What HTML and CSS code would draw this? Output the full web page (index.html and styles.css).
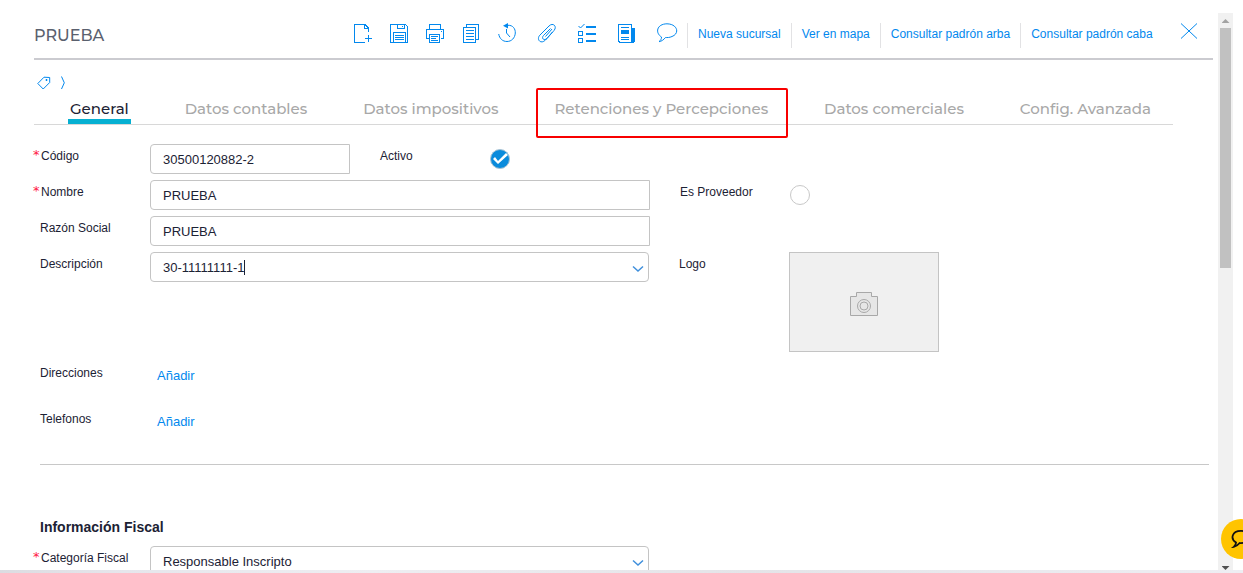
FILE: index.html
```html
<!DOCTYPE html>
<html lang="es">
<head>
<meta charset="utf-8">
<title>PRUEBA</title>
<link rel="stylesheet" href="styles.css">
</head>
<body>
<main class="dialog">
  <div class="content">
    <header class="header">
      <h1 class="title">PRUEBA</h1>
      <div class="toolbar">
        <div class="tools">
          <button class="tool" aria-label="Nuevo"><svg width="20" height="20" viewBox="0 0 20 20"><path d="M12 19.500H1.500V1.500H12L15.500 5V9M11.500 1.500V5.500H15.500M12.500 2.500L15 5M15.500 11.500V18.500M12 15.500H19"/></svg></button>
          <button class="tool" aria-label="Guardar"><svg width="20" height="20" viewBox="0 0 20 20"><path d="M1.500 1.500H16.500L18.500 3.500V19.500H1.500ZM8.500 1.500V5.500H15.500V1.500M13 3.500H14M4 19.500V9.500H16.500V19.500M5.500 12.500H14.500M5.500 14.500H14.500M5.500 16.500H14.500"/></svg></button>
          <button class="tool" aria-label="Imprimir"><svg width="20" height="20" viewBox="0 0 20 20"><path d="M4.500 6V1.500H15.500V6M4.500 15.500H1.500V6.500H18.500V15.500H15.500M4.500 11.500H14.500V19.500H4.500ZM6 13.500H13M6 15.500H11M6 17.500H13M16 8.500H17"/></svg></button>
          <button class="tool" aria-label="Copiar"><svg width="20" height="20" viewBox="0 0 20 20"><path d="M2.500 4.500H14.500V19.500H2.500ZM5.500 4V1.500H17.500V16.500H15M4.500 7.500H13M4.500 10.500H13M4.500 13.500H13M4.500 16.500H13"/></svg></button>
          <button class="tool" aria-label="Historial"><svg class="smooth" width="20" height="20" viewBox="0 0 20 20"><path d="M11 2.300C16 2 18.500 6 18.300 10C18 15 14.500 18.500 10 18.500C5.500 18.500 2.500 15.500 1.700 11M9.500 6V10L13 14"/><path class="solid" d="M6 2.800L11 0V5.500Z"/></svg></button>
        </div>
        <div class="tools wide">
          <button class="tool" aria-label="Adjuntar"><svg class="smooth" width="20" height="20" viewBox="0 0 20 20"><path d="M15.500 9L8.500 17C3.500 22 -1 16 3 12L12 3C16-1 20.500 3.500 17 7.500L10 15.500C7 18 4 15.500 6.500 12.500L13.500 5.500M15 6L8.500 13.500"/></svg></button>
          <button class="tool" aria-label="Tareas"><svg width="20" height="20" viewBox="0 0 20 20"><path class="smooth" d="M1.500 3L3.500 5L7.500 1"/><path d="M1.500 8.500H5.500V12.500H1.500ZM1.500 15.500H5.500V19.500H1.500Z"/><path class="solid" d="M9 3H19V5H9ZM9 10H19V12H9ZM9 17H19V19H9Z"/></svg></button>
          <button class="tool" aria-label="Novedades"><svg width="20" height="20" viewBox="0 0 20 20"><path d="M1.500 1.500H14.500V19.500H3L1.500 18ZM4 4.500H12M4 14.500H12M4 16.500H12"/><path class="solid" d="M4 7H12V11H4ZM15 5H18V18L16.500 20H15Z"/></svg></button>
          <button class="tool" aria-label="Comentarios"><svg class="smooth" width="22" height="20" viewBox="0 0 22 20"><path d="M5.500 14C-1 10 .5 1 11 .8C21.500 1 24 10.500 16 13.500C13.500 14.700 11 14.600 9.500 14.500C7.500 17 5.500 18.300 3 18.700C4.700 17.300 5.500 16 5.500 14Z"/></svg></button>
        </div>
        <nav class="links">
          <a href="#">Nueva sucursal</a>
          <a href="#">Ver en mapa</a>
          <a href="#">Consultar padrón arba</a>
          <a href="#">Consultar padrón caba</a>
        </nav>
        <button class="close" aria-label="Cerrar"><svg class="smooth" width="18" height="18" viewBox="0 0 18 18"><path d="M1 1.500L17 16.500M17 1.500L1 16.500"/></svg></button>
      </div>
    </header>

    <div class="tags">
      <button class="plain" aria-label="Etiquetas"><svg class="smooth" width="14" height="14" viewBox="0 0 14 14"><path d="M.8 7.500L7 1.200L12.700 1.500V6.500L6.200 13ZM10 3.500V4.500H9V3.500Z"/></svg></button>
      <button class="plain" aria-label="Expandir"><svg class="smooth" width="6" height="14" viewBox="0 0 6 14"><path d="M1.500 .5L4.300 6.800L1.500 13"/></svg></button>
    </div>

    <nav class="tabs">
      <button class="tab active">General</button>
      <button class="tab">Datos contables</button>
      <button class="tab">Datos impositivos</button>
      <button class="tab marked">Retenciones y Percepciones</button>
      <button class="tab">Datos comerciales</button>
      <button class="tab">Config. Avanzada</button>
    </nav>

    <form class="form">
      <div class="row">
        <label class="label required" for="codigo">Código</label>
        <input class="field short" id="codigo" value="30500120882-2">
        <label class="label second" for="activo">Activo</label>
        <input class="check" type="checkbox" id="activo" checked>
      </div>
      <div class="row">
        <label class="label required" for="nombre">Nombre</label>
        <input class="field" id="nombre" value="PRUEBA">
        <label class="label second" for="proveedor">Es Proveedor</label>
        <input class="check" type="checkbox" id="proveedor">
      </div>
      <div class="row">
        <label class="label" for="razon">Razón Social</label>
        <input class="field" id="razon" value="PRUEBA">
      </div>
      <div class="row">
        <label class="label" for="descripcion">Descripción</label>
        <div class="combo">
          <input class="field" id="descripcion" value="30-11111111-1">
          <span class="caret"></span>
          <svg class="chevron smooth" width="12" height="8" viewBox="0 0 12 8"><path d="M1 1.500L6 6L11 1.500"/></svg>
        </div>
        <label class="label second" for="logo">Logo</label>
        <button class="photo" type="button" id="logo" aria-label="Logo"><svg width="30" height="26" viewBox="0 0 30 26"><path d="M1.500 5.500H7.500V1.500H22.500V5.500H28.500V24.500H1.500Z"/><circle cx="15" cy="15" r="6.500"/><circle cx="15" cy="15" r="4"/></svg></button>
      </div>
      <div class="row contact">
        <span class="label">Direcciones</span>
        <a class="add" href="#">Añadir</a>
      </div>
      <div class="row contact">
        <span class="label">Telefonos</span>
        <a class="add" href="#">Añadir</a>
      </div>
      <hr class="rule">
      <h2 class="section">Información Fiscal</h2>
      <div class="row">
        <label class="label required" for="categoria">Categoría Fiscal</label>
        <div class="combo">
          <select class="field" id="categoria"><option>Responsable Inscripto</option></select>
          <svg class="chevron smooth" width="12" height="8" viewBox="0 0 12 8"><path d="M1 1.500L6 6L11 1.500"/></svg>
        </div>
      </div>
    </form>
  </div>
  <div class="scrollbar" aria-hidden="true">
    <span class="arrow up"></span>
    <span class="thumb"></span>
    <span class="arrow down"></span>
  </div>
</main>
<div class="backdrop"></div>
<button class="chat" aria-label="Chat"><svg class="smooth" width="22" height="18" viewBox="0 0 22 20"><path d="M5.500 14C-1 10 .5 1 11 1C21.500 1 24 10.500 16 13.500C13.500 14.700 11 14.600 9.500 14.500C7.500 17 5.500 18.300 3 18.700C4.700 17.300 5.500 16 5.500 14Z"/></svg></button>
</body>
</html>
```

FILE: styles.css
```css
* { box-sizing: border-box; }

body {
  margin: 0;
  height: 100vh;
  display: flex;
  flex-direction: column;
  overflow: hidden;
  background: #fff;
  color: #1c2234;
  font: 12px/16px "Liberation Sans", Arial, sans-serif;
}

button {
  border: 0;
  padding: 0;
  background: none;
  color: inherit;
  font: inherit;
  cursor: pointer;
}

a { color: #0288ee; text-decoration: none; }

svg {
  display: block;
  fill: none;
  stroke: #0288ee;
  shape-rendering: crispEdges;
}

.smooth { shape-rendering: auto; }
.solid { fill: #0288ee; stroke: none; }

.dialog {
  flex: 1;
  min-height: 0;
  display: flex;
  padding: 13px 10px 0 0;
}

.content {
  flex: 1;
  min-width: 0;
  overflow: hidden;
  padding: 0 5px 0 34px;
}

.header {
  display: flex;
  align-items: flex-start;
  justify-content: space-between;
  height: 47px;
  border-bottom: 2px solid #cbcbd0;
}

.title {
  margin: 0;
  padding-top: 11px;
  color: #5a606e;
  font: 500 16px/24px Montserrat, Inter, sans-serif;
}

.toolbar {
  flex: 0 0 868px;
  display: flex;
  align-items: flex-start;
  padding-top: 7px;
}

.tools, .links { display: flex; }
.tools.wide { margin-left: 2px; }
.links { padding-top: 3px; }

.tool {
  width: 36px;
  height: 26px;
  display: grid;
  place-items: center;
}

.wide .tool { width: 40px; }

.links a {
  padding: 3px 10px 6px;
  border-left: 1px solid #e2e2e4;
  white-space: nowrap;
}

.close {
  width: 48px;
  display: grid;
  place-items: center;
  margin-left: auto;
  padding-top: 2px;
}

.tags {
  display: flex;
  align-items: center;
  gap: 9px;
  height: 34px;
  padding: 12px 3px 0;
}

.tabs {
  display: flex;
  justify-content: space-between;
  margin-right: 40px;
  padding: 0 20px 0 34px;
  border-bottom: 1px solid #d8d8d8;
}

.tab {
  position: relative;
  padding: 5px 2px 0;
  border-bottom: 5px solid transparent;
  color: #a8a8a8;
  font: 500 15px/20px Montserrat, Inter, sans-serif;
  white-space: nowrap;
}

.tab.active { color: #1c2234; border-color: #06b0d2; }

.marked::after {
  content: "";
  position: absolute;
  inset: -6px -18px -19px -16px;
  border: 2px solid #f80000;
  border-radius: 2px;
}

.form { padding-top: 19px; }

.row {
  display: flex;
  align-items: flex-start;
  margin-bottom: 6px;
}

.label {
  position: relative;
  flex: 0 0 116px;
  padding: 4px 0 0 6px;
}

.label.required { padding-left: 7px; }

.required::before {
  content: "*";
  position: absolute;
  left: -1px;
  top: 3px;
  color: #ff1744;
  font-family: "DejaVu Sans", sans-serif;
  font-size: 13px;
}

.label.second {
  flex-basis: 110px;
  margin-left: 30px;
  padding-left: 0;
}

.field {
  width: 500px;
  height: 30px;
  padding: 1px 12px 0;
  border: 1px solid #c4c4c4;
  border-radius: 4px 0 0 4px;
  outline: 0;
  background: #fff;
  color: #1c2234;
  font: 13px/16px "Liberation Sans", Arial, sans-serif;
  appearance: none;
}

.field.short { width: 200px; }

.combo { position: relative; width: 499px; }
.combo .field { width: 100%; border-radius: 4px; }

.chevron {
  position: absolute;
  right: 5px;
  top: 13px;
  stroke: #3f8fdc;
  stroke-width: 1.5;
  pointer-events: none;
}

.caret {
  position: absolute;
  left: 94px;
  top: 8px;
  width: 1px;
  height: 15px;
  background: #1c2234;
}

.check {
  width: 20px;
  height: 20px;
  margin: 5px 0 0;
  border: 1px solid #c8c8c8;
  border-radius: 50%;
  appearance: none;
}

.check:checked { background: #0a8bdc; border-color: #a9c3d4; }

.check:checked::after {
  content: "";
  display: block;
  width: 18px;
  height: 18px;
  background: #fff;
  clip-path: polygon(2px 9px, 4px 7px, 7px 11px, 15px 3px, 17px 5px, 7px 14px);
}

.photo {
  width: 150px;
  height: 100px;
  display: grid;
  place-items: center;
  padding-top: 4px;
  border: 1px solid #c4c4c4;
  background: #f0f0f0;
}

.photo svg {
  fill: #e6e6e6;
  stroke: #a8a8a8;
  shape-rendering: auto;
}

.contact { height: 37px; margin: 9px 0 0; }
.contact .add { padding: 7px; font-size: 13px; }

.rule {
  height: 1px;
  margin: 20px 4px 0 6px;
  border: 0;
  background: #c8c8c8;
}

.section {
  margin: 52px 0 9px 6px;
  font-size: 14px;
  line-height: 20px;
}

.scrollbar {
  flex: 0 0 15px;
  display: flex;
  flex-direction: column;
  align-items: center;
  background: #f1f1f1;
}

.thumb { width: 11px; height: 43%; background: #c1c1c1; }

.arrow {
  height: 15px;
  width: 8px;
  background: #a3a3a3;
  clip-path: polygon(0 10px, 4px 6px, 8px 10px);
}

.arrow.down {
  margin-top: auto;
  height: 8px;
  background: #505050;
  clip-path: polygon(0 4px, 4px 8px, 8px 4px);
}

.backdrop {
  height: 3px;
  background: linear-gradient(90deg, #dcdce1, #e6e6ec 10%, #eeeef2 30%, #e4e4e8 60%, #eeeef3);
}

.chat {
  position: fixed;
  right: -18px;
  bottom: 14px;
  width: 40px;
  height: 40px;
  display: grid;
  place-items: center;
  border-radius: 50%;
  background: #ffc400;
}

.chat svg { stroke: #111; stroke-width: 2; }
```
